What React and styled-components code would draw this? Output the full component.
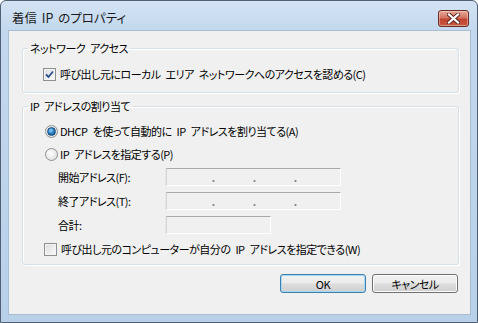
import React from 'react'
import styled, { createGlobalStyle } from 'styled-components'

const Global = createGlobalStyle`
  html, body {
    margin: 0;
    padding: 0;
    background: #ffffff;
  }
  body {
    font-family: "Noto Sans CJK JP", "Noto Sans", sans-serif;
    font-size: 11px;
    font-feature-settings: "palt";
    letter-spacing: -0.5px;
    word-spacing: 3px;
    color: #000;
  }
`

const Window = styled.div`
  width: 476px;
  height: 321px;
  border: 1px solid #505f72;
  border-radius: 6px 6px 0 0;
  background: linear-gradient(180deg, #d3e3f4 0px, #c3d8ee 30px, #b9d0e9 100%);
  display: flex;
  flex-direction: column;
  box-sizing: content-box;
`

const TitleBar = styled.div`
  height: 29px;
  display: flex;
  align-items: flex-start;
  justify-content: space-between;
  padding: 0 8px 0 11px;
`

const Title = styled.div`
  font-size: 12.5px;
  letter-spacing: 0;
  word-spacing: 2px;
  line-height: 14px;
  margin-top: 10px;
  color: #1a1a1a;
`

const CloseButton = styled.div`
  width: 29px;
  height: 15px;
  margin-top: 9px;
  border: 1px solid #6b2e26;
  border-radius: 3px;
  background: linear-gradient(180deg, #e8a999 0%, #d27462 45%, #c2432f 55%, #c75a45 100%);
  box-shadow: inset 0 0 0 1px rgba(255, 220, 210, 0.45);
  display: flex;
  align-items: center;
  justify-content: center;
`

const Client = styled.div`
  flex: 1;
  margin: 0 6px 7px 7px;
  background: #f0f0f0;
  border: 1px solid #a8bcd2;
  padding: 10px 11px 0 13px;
  display: flex;
  flex-direction: column;
`

const Group = styled.fieldset`
  margin: 0 0 ${p => p.$gap}px 0;
  padding: ${p => p.$pad};
  border: 1px solid #d5dfe5;
  border-radius: 3px;
  box-shadow: inset 1px 1px 0 #fff, 1px 1px 0 #fff;
  min-width: 0;
  display: flex;
  flex-direction: column;
`

const Legend = styled.legend`
  padding: 0 2px;
  margin-left: ${p => p.$shift}px;
  line-height: 14px;
`

const OptionRow = styled.label`
  display: flex;
  align-items: center;
  height: 14px;
  line-height: 14px;
  gap: ${p => p.$gap}px;
  margin-bottom: ${p => p.$after || 0}px;
`

const CheckBox = styled.span`
  width: 11px;
  height: 11px;
  border: 1px solid #8e8f8f;
  background: linear-gradient(135deg, #dcdcdc, #fbfbfb);
  box-shadow: inset 0 0 0 1px #f4f4f4;
  display: flex;
  align-items: center;
  justify-content: center;
`

const Radio = styled.span`
  width: 11px;
  height: 11px;
  border-radius: 50%;
  border: 1px solid #8e8f8f;
  background: radial-gradient(circle at 40% 40%, #ffffff, #d8d8d8);
  display: flex;
  align-items: center;
  justify-content: center;
  margin-left: 1px;
`

const RadioDot = styled.span`
  width: 7px;
  height: 7px;
  border-radius: 50%;
  background: radial-gradient(circle at 40% 35%, #9ad6ff 0%, #2f86c8 45%, #0d3f74 100%);
  border: 0.5px solid #1b4a7a;
`

const FieldGrid = styled.div`
  display: grid;
  grid-template-columns: 108px auto;
  row-gap: 6px;
  padding-left: 14px;
  margin: 7px 0 8px;
  justify-items: start;
  align-items: center;
`

const FieldLabel = styled.span`
  line-height: 14px;
`

const IpBox = styled.div`
  width: ${p => p.$w}px;
  height: 16px;
  border: 1px solid;
  border-color: #a9a9a9 #ffffff #ffffff #d4d4d4;
  background: #f0f0f0;
  box-shadow: -1px 0 0 #e6e6e6;
  display: flex;
  align-items: flex-end;
  padding-left: 7px;
`

const Segment = styled.span`
  width: 38px;
`

const Dot = styled.span`
  width: 3px;
  height: 2px;
  margin-bottom: 3px;
  background: #7a7a7a;
  transform: scale(0.6, 0.9);
`

const ButtonRow = styled.div`
  display: flex;
  justify-content: flex-end;
  gap: 6px;
  margin-top: 9px;
  padding-right: 1px;
`

const Button = styled.div`
  width: 84px;
  height: 17px;
  border: 1px solid ${p => (p.$default ? '#3c7fb1' : '#707070')};
  border-radius: 3px;
  background: linear-gradient(180deg, #f2f2f2 0%, #ebebeb 48%, #dddddd 52%, #cfcfcf 100%);
  box-shadow: inset 0 0 0 1px ${p => (p.$default ? '#a6d7f3' : '#fcfcfc')};
  display: flex;
  align-items: center;
  justify-content: center;
  line-height: 14px;
`

const CloseGlyph = () => (
  <svg width="13" height="11" viewBox="0 0 13 11">
    <path d="M2 1.5 L11 9.5 M11 1.5 L2 9.5" stroke="#5a241c" strokeWidth="4" strokeLinecap="square" />
    <path d="M2 1.5 L11 9.5 M11 1.5 L2 9.5" stroke="#ffffff" strokeWidth="2.2" strokeLinecap="square" />
  </svg>
)

const CheckMark = () => (
  <svg width="9" height="9" viewBox="0 0 9 9">
    <path d="M1 4.5 L3.5 7 L8 1.5" fill="none" stroke="#2a4f8f" strokeWidth="1.8" />
  </svg>
)

const IpField = ({ width, dots }) => (
  <IpBox $w={width}>
    {dots &&
      [0, 1, 2].map(i => (
        <React.Fragment key={i}>
          <Segment />
          <Dot />
        </React.Fragment>
      ))}
  </IpBox>
)

export default function App () {
  return (
    <>
      <Global />
      <Window>
        <TitleBar>
          <Title>着信 IP のプロパティ</Title>
          <CloseButton>
            <CloseGlyph />
          </CloseButton>
        </TitleBar>
        <Client>
          <Group $gap={6} $pad="12px 20px 11px">
            <Legend $shift={-15}>ネットワーク アクセス</Legend>
            <OptionRow $gap={4}>
              <CheckBox>
                <CheckMark />
              </CheckBox>
              呼び出し元にローカル エリア ネットワークへのアクセスを認める(C)
            </OptionRow>
          </Group>
          <Group $gap={0} $pad="11px 20px 8px 21px">
            <Legend $shift={-16}>IP アドレスの割り当て</Legend>
            <OptionRow $gap={2} $after={9}>
              <Radio>
                <RadioDot />
              </Radio>
              DHCP を使って自動的に IP アドレスを割り当てる(A)
            </OptionRow>
            <OptionRow $gap={2}>
              <Radio />
              IP アドレスを指定する(P)
            </OptionRow>
            <FieldGrid>
              <FieldLabel>開始アドレス(F):</FieldLabel>
              <IpField width={166} dots />
              <FieldLabel>終了アドレス(T):</FieldLabel>
              <IpField width={166} dots />
              <FieldLabel>合計:</FieldLabel>
              <IpField width={96} />
            </FieldGrid>
            <OptionRow $gap={4}>
              <CheckBox />
              呼び出し元のコンピューターが自分の IP アドレスを指定できる(W)
            </OptionRow>
          </Group>
          <ButtonRow>
            <Button $default>OK</Button>
            <Button>キャンセル</Button>
          </ButtonRow>
        </Client>
      </Window>
    </>
  )
}
